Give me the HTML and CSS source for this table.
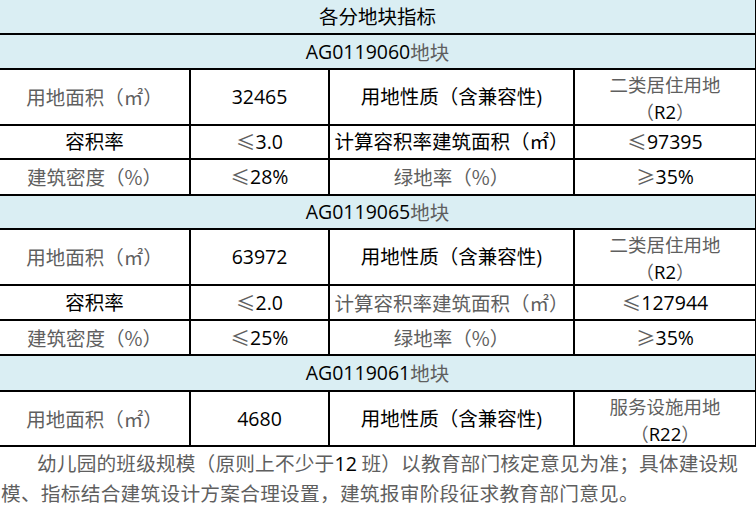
FILE: index.html
```html
<!DOCTYPE html>
<html lang="zh-CN">
<head>
<meta charset="utf-8">
<title>各分地块指标</title>
<link rel="stylesheet" href="styles.css">
</head>
<body>
<div class="sheet">
  <div class="grid">
    <div class="cell full blue">各分地块指标</div>

    <div class="cell full blue">AG0119060<span class="g">地块</span></div>
    <div class="cell g">用地面积（㎡）</div>
    <div class="cell">32465</div>
    <div class="cell">用地性质（含兼容性)</div>
    <div class="cell two"><span class="ln g">二类居住用地</span><span class="ln"><span class="g">（</span>R2<span class="g">）</span></span></div>

    <div class="cell">容积率</div>
    <div class="cell"><span class="g">≤</span>3.0</div>
    <div class="cell">计算容积率建筑面积（㎡）</div>
    <div class="cell"><span class="g">≤</span>97395</div>

    <div class="cell g">建筑密度（%）</div>
    <div class="cell"><span class="g">≤</span>28%</div>
    <div class="cell g">绿地率（%）</div>
    <div class="cell"><span class="g">≥</span>35%</div>

    <div class="cell full blue">AG0119065<span class="g">地块</span></div>
    <div class="cell g">用地面积（㎡）</div>
    <div class="cell">63972</div>
    <div class="cell">用地性质（含兼容性)</div>
    <div class="cell two"><span class="ln g">二类居住用地</span><span class="ln"><span class="g">（</span>R2<span class="g">）</span></span></div>

    <div class="cell">容积率</div>
    <div class="cell"><span class="g">≤</span>2.0</div>
    <div class="cell g">计算容积率建筑面积（㎡）</div>
    <div class="cell"><span class="g">≤</span>127944</div>

    <div class="cell g">建筑密度（%）</div>
    <div class="cell"><span class="g">≤</span>25%</div>
    <div class="cell g">绿地率（%）</div>
    <div class="cell"><span class="g">≥</span>35%</div>

    <div class="cell full blue">AG0119061<span class="g">地块</span></div>
    <div class="cell g">用地面积（㎡）</div>
    <div class="cell">4680</div>
    <div class="cell">用地性质（含兼容性)</div>
    <div class="cell two"><span class="ln g">服务设施用地</span><span class="ln"><span class="g">（</span>R22<span class="g">）</span></span></div>
  </div>
  <p class="note"><span class="line1">幼儿园的班级规模（原则上不少于<span class="k">12</span> 班）以教育部门核定意见为准；具体建设规</span><span class="line2">模、指标结合建筑设计方案合理设置，建筑报审阶段征求教育部门意见。</span></p>
</div>
</body>
</html>
```
FILE: styles.css
```css
html, body {
  margin: 0;
  padding: 0;
  background: #fff;
}

body {
  width: 756px;
  height: 506px;
  overflow: hidden;
  font-family: "Open Sans", "Noto Sans CJK SC", sans-serif;
  color: #000;
  text-spacing-trim: space-all;
}

.grid {
  display: grid;
  width: 755px;
  grid-template-columns: 189px 137px 243px 180px;
  grid-template-rows: 33px 33px 54px 32px 34px 32px 54px 33px 33px 34px 53px;
  gap: 2px;
  background: #000;
  border-right: 1px solid #000;
  border-bottom: 2px solid #000;
}

.cell {
  background: #fff;
  display: flex;
  align-items: center;
  justify-content: center;
  font-size: 19.5px;
  line-height: 26px;
  white-space: nowrap;
  text-align: center;
}

.full {
  grid-column: 1 / -1;
}

.blue {
  background: #daeef3;
}

.two {
  flex-direction: column;
  font-size: 18.5px;
  padding-top: 2px;
}

.ln {
  display: block;
  line-height: 27px;
}

.g {
  color: #5f5f5f;
  font-family: "Noto Sans CJK SC", sans-serif;
}

.note {
  margin: 0;
  padding: 1px 18px 0 1px;
  font-family: "Noto Sans CJK SC", sans-serif;
  font-size: 19.7px;
  line-height: 29px;
  color: #5f5f5f;
}

.line1 {
  display: block;
  text-indent: 36px;
  text-align: justify;
  text-align-last: justify;
}

.line2 {
  display: block;
  letter-spacing: 0.25px;
}

.k {
  color: #000;
  font-family: "Open Sans", "Noto Sans CJK SC", sans-serif;
}
```
